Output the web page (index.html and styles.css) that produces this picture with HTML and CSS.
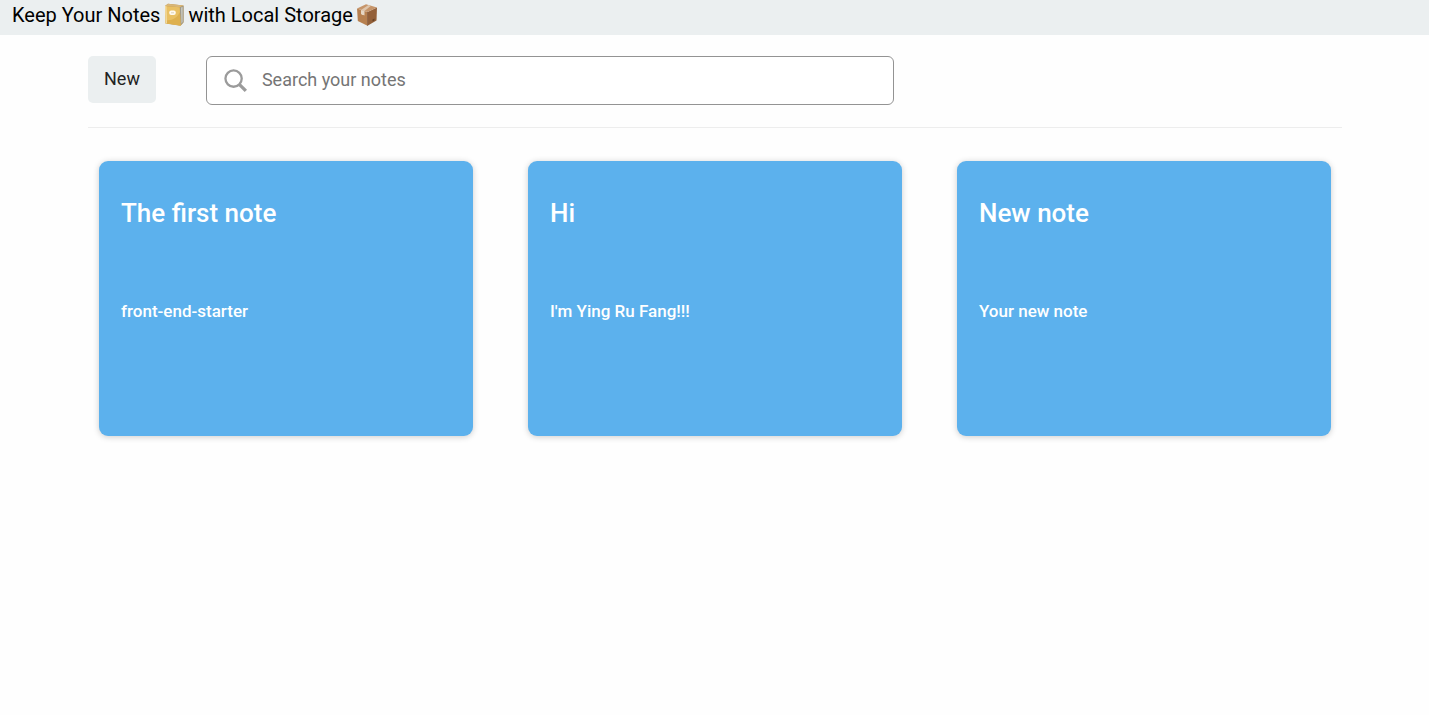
FILE: index.html
```html
<!DOCTYPE html>
<html lang="en">
<head>
<meta charset="utf-8">
<meta name="viewport" content="width=device-width, initial-scale=1">
<title>Keep Your Notes</title>
<link rel="stylesheet" href="styles.css">
</head>
<body>
<header class="site-header">
  <h1 class="site-title">
    <span>Keep Your Notes</span>
    <svg class="emoji" viewBox="0 0 22 24" role="img" aria-label="Notebook">
      <path d="M2 3 5 .8 20.500 2.500V19.500L17.500 22.800 2.600 20.500z" fill="#b98f45"/>
      <path d="M16.800 4.300 20.500 2.800V19l-3 3.500z" fill="#9d9a8d"/>
      <path d="M18 4.600 19.600 3.900V19l-1.200 1.500z" fill="#c9c7bc"/>
      <path d="M2 3 5 .8 20.500 2.500 16.800 4.300z" fill="#d8b677"/>
      <path d="M2 3 16.800 4.300 17.500 22.500 2.600 20.300z" fill="#e9c063"/>
      <path d="M17 9 17.500 22.500 2.600 20.300V17C9 18 14 15 17 9z" fill="#deb04e"/>
      <path d="M2 3 3.500 3.200 4 20.400 2.600 20.300z" fill="#f3dba0"/>
      <rect x="6.200" y="7.600" width="6.600" height="4.400" rx="2" fill="#fffaf0"/>
      <path d="M8 9.800h3" stroke="#d0c09a" stroke-width=".7"/>
    </svg>
    <span>with Local Storage</span>
    <svg class="emoji" viewBox="0 0 22 24" role="img" aria-label="Package">
      <path d="M1 5.500 11.500 9v13.800L1.800 18z" fill="#b7804f"/>
      <path d="M11.500 9 21 4.500 20.500 17.500l-9 5.300z" fill="#936039"/>
      <path d="M1 5.500 10 1.200 21 4.500 11.500 9z" fill="#c6956a"/>
      <path d="M12.500 2 15 2.700 8.500 8 5 6.900z" fill="#dfc6ac"/>
      <path d="M5 6.900 8.500 8v4.500l-1.200-.6-1 .2L5 11z" fill="#e6d6c3"/>
      <path d="M11.500 9v13.800" fill="none" stroke="#7f5130" stroke-width=".6"/>
      <path d="M16.500 16.500l2-1.100v2l-2 1.100z" fill="#654126"/>
    </svg>
  </h1>
</header>
<main class="page">
  <form class="toolbar" role="search">
    <button class="new-button" type="button">New</button>
    <label class="search">
      <svg class="search-icon" viewBox="0 0 24 24" aria-hidden="true">
        <circle cx="10" cy="10" r="8.500" fill="none" stroke="#9b9b9b" stroke-width="2.400"/>
        <path d="M15.700 15.700 22.800 22.800" stroke="#9b9b9b" stroke-width="3.400"/>
      </svg>
      <input class="search-input" type="text" placeholder="Search your notes" aria-label="Search your notes">
    </label>
  </form>
  <section class="notes" aria-label="Notes">
    <article class="note">
      <h2 class="note-title">The first note</h2>
      <p class="note-body">front-end-starter</p>
    </article>
    <article class="note">
      <h2 class="note-title">Hi</h2>
      <p class="note-body">I'm Ying Ru Fang!!!</p>
    </article>
    <article class="note">
      <h2 class="note-title">New note</h2>
      <p class="note-body">Your new note</p>
    </article>
  </section>
</main>
</body>
</html>
```
FILE: styles.css
```css
*, *::before, *::after { box-sizing: border-box; }
body {
  margin: 0;
  background: #fefefe;
  color: #000;
  font-family: Roboto, "Liberation Sans", sans-serif;
  font-size: 18px;
}
.site-header {
  padding: 0 12px 5px;
  background: #ebeff0;
}
.site-title {
  display: flex;
  align-items: center;
  gap: 3px;
  margin: 0;
  font-size: 20px;
  font-weight: 400;
  line-height: 30px;
}
.emoji { width: 22px; height: 24px; }
.page { padding: 21px 87px 21px 88px; }
.toolbar {
  display: flex;
  align-items: flex-start;
  gap: 50px;
  padding-bottom: 22px;
  border-bottom: 1px solid #ededed;
}
.new-button {
  padding: 0 16px 2px;
  border: 0;
  border-radius: 5px;
  background: #ebeff0;
  color: #222;
  font: inherit;
  line-height: 45px;
}
.search {
  display: flex;
  align-items: center;
  gap: 15px;
  flex: 0 0 55%;
  max-width: 688px;
  height: 49px;
  padding: 0 17px;
  border: 1px solid #939393;
  border-radius: 6px;
  background: #fff;
}
.search-icon { flex: none; width: 23px; height: 23px; }
.search-input {
  flex: 1;
  min-width: 0;
  padding: 0 0 2px;
  border: 0;
  outline: 0;
  background: transparent;
  font: inherit;
}
.search-input::placeholder { color: #757575; opacity: 1; }
.notes {
  display: grid;
  grid-template-columns: repeat(3, 1fr);
  gap: 55px;
  padding: 33px 11px;
}
.note {
  min-height: 275px;
  padding: 34px 22px;
  border-radius: 9px;
  background: #5cb1ed;
  box-shadow: 0 1px 6px rgba(0, 0, 0, .2);
  color: #fff;
}
.note-title {
  margin: 0 0 59px;
  font-size: 26px;
  font-weight: 500;
  line-height: 36px;
}
.note-body {
  margin: 0;
  font-size: 17px;
  font-weight: 500;
  line-height: 42px;
}
```
